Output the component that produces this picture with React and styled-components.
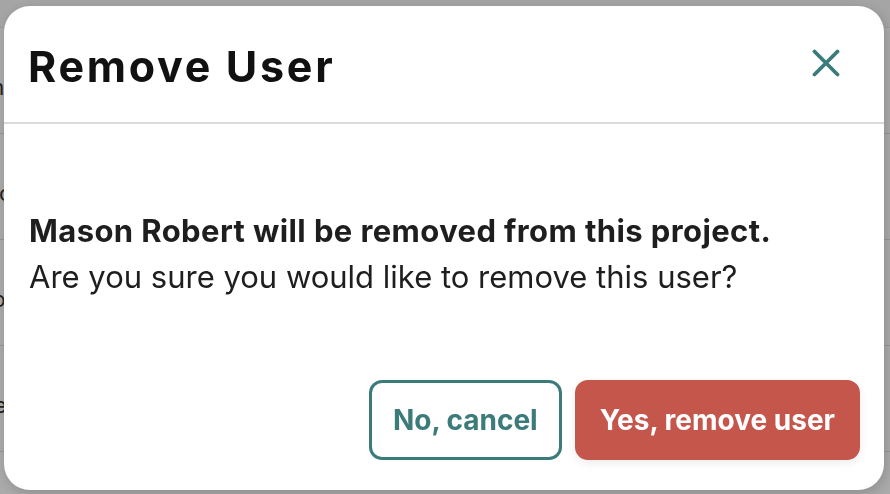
import React from "react";
import styled, { createGlobalStyle } from "styled-components";

const colors = {
  teal: "#3b7c7b",
  red: "#c5564b",
  ink: "#111111",
  text: "#1e1e1e",
  divider: "#dadada",
  white: "#ffffff",
};

const GlobalStyle = createGlobalStyle`
  html, body {
    margin: 0;
    padding: 0;
    height: 100%;
    overflow: hidden;
  }
  body {
    font-family: "Inter", "Noto Sans", sans-serif;
    background: #ffffff;
  }
`;

// the page that sits behind the dialog
const Page = styled.div`
  display: flex;
  flex-direction: column;
  height: 494px;
`;

const PageHead = styled.div`
  height: 27px;
  border-bottom: 1px solid #e6e6e6;
  background: #f6f6f6;
`;

const PageRow = styled.div`
  height: 106px;
  display: flex;
  align-items: center;
  border-bottom: 1px solid #e0e0e0;
  font-size: 22px;
  color: #333;
  padding-top: 12px;
  box-sizing: border-box;
`;

const RowText = styled.span`
  margin-left: ${(props) => props.offset}px;
`;

const Overlay = styled.div`
  position: fixed;
  inset: 0;
  background: rgba(0, 0, 0, 0.33);
  display: flex;
  align-items: flex-start;
  padding: 6px 0 0 4px;
`;

const Dialog = styled.div`
  width: 880px;
  height: 484px;
  background: ${colors.white};
  border-radius: 26px;
  display: flex;
  flex-direction: column;
  box-shadow: 2px 4px 14px rgba(0, 0, 0, 0.18);
  overflow: hidden;
`;

const Header = styled.div`
  height: 116px;
  display: flex;
  align-items: center;
  justify-content: space-between;
  padding: 0 40px 0 24px;
  border-bottom: 2px solid ${colors.divider};
`;

const Title = styled.h2`
  margin: 0;
  font-size: 43px;
  font-weight: 700;
  letter-spacing: 2.7px;
  color: ${colors.ink};
  padding-top: 4px;
`;

const CloseButton = styled.button`
  width: 36px;
  height: 36px;
  border: none;
  background: none;
  padding: 0;
  display: flex;
  align-items: center;
  justify-content: center;
  cursor: pointer;
  margin-top: -2px;
`;

const Body = styled.div`
  flex: 1;
  display: flex;
  flex-direction: column;
  justify-content: center;
  padding: 4px 25px 0;
`;

const Lead = styled.p`
  margin: 0;
  font-size: 31px;
  line-height: 46px;
  font-weight: 700;
  letter-spacing: 0.4px;
  color: ${colors.text};
`;

const Question = styled.p`
  margin: 0;
  font-size: 31px;
  line-height: 46px;
  font-weight: 400;
  color: ${colors.text};
`;

const Footer = styled.div`
  display: flex;
  justify-content: flex-end;
  gap: 13px;
  padding: 0 24px 30px;
`;

const Button = styled.button`
  height: 80px;
  padding: 0 ${(props) => (props.variant === "danger" ? 22 : 21)}px;
  border-radius: 13px;
  font-family: "Inter", "Noto Sans", sans-serif;
  font-size: 28px;
  font-weight: 700;
  cursor: pointer;
  box-sizing: border-box;
  border: 3px solid
    ${(props) => (props.variant === "danger" ? colors.red : colors.teal)};
  background: ${(props) =>
    props.variant === "danger" ? colors.red : colors.white};
  color: ${(props) =>
    props.variant === "danger" ? colors.white : colors.teal};
  box-shadow: ${(props) =>
    props.variant === "danger" ? "0 3px 10px rgba(0, 0, 0, 0.08)" : "none"};
`;

const CloseIcon = () => (
  <svg width="28" height="28" viewBox="0 0 28 28" fill="none">
    <path
      d="M2.5 2.5 L25.5 25.5 M25.5 2.5 L2.5 25.5"
      stroke={colors.teal}
      strokeWidth="3.8"
      strokeLinecap="round"
    />
  </svg>
);

const rows = [
  { text: "Name", offset: -44 },
  { text: "Doc", offset: -30 },
  { text: "Jo", offset: -20 },
  { text: "Use", offset: -34 },
];

const App = () => {
  return (
    <>
      <GlobalStyle />
      <Page>
        <PageHead />
        {rows.map((row) => (
          <PageRow key={row.text}>
            <RowText offset={row.offset}>{row.text}</RowText>
          </PageRow>
        ))}
      </Page>
      <Overlay>
        <Dialog role="dialog" aria-labelledby="remove-user-title">
          <Header>
            <Title id="remove-user-title">Remove User</Title>
            <CloseButton aria-label="Close">
              <CloseIcon />
            </CloseButton>
          </Header>
          <Body>
            <Lead>Mason Robert will be removed from this project.</Lead>
            <Question>Are you sure you would like to remove this user?</Question>
          </Body>
          <Footer>
            <Button>No, cancel</Button>
            <Button variant="danger">Yes, remove user</Button>
          </Footer>
        </Dialog>
      </Overlay>
    </>
  );
};

export default App;
